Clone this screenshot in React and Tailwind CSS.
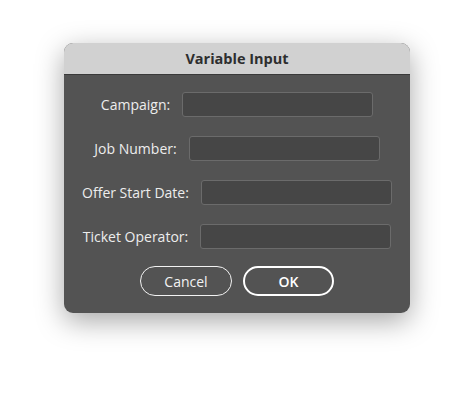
import React from "react";

const fields = ["Campaign:", "Job Number:", "Offer Start Date:", "Ticket Operator:"];

export default function App() {
  return (
    <div
      className="w-[474px] h-[398px] bg-white pt-[43px] pl-[64px]"
      style={{ fontFamily: "'Open Sans', 'Liberation Sans', sans-serif" }}
    >
      <div className="w-[346px] h-[270px] rounded-[9px] overflow-hidden bg-[#535353] shadow-[0_8px_28px_rgba(0,0,0,0.35)] flex flex-col">
        <div className="h-[32px] bg-[#d1d1d1] flex items-center justify-center border-b border-[#3a3a3a]">
          <span className="text-[14.5px] font-bold text-[#2e2e2e]">Variable Input</span>
        </div>
        <div className="flex flex-col items-center pt-[17px] gap-[19px]">
          {fields.map((f) => (
            <div key={f} className="flex items-center gap-[12px]">
              <span className="text-[14px] text-[#ededed]">{f}</span>
              <div className="w-[191px] h-[25px] rounded-[3px] bg-[#464646] border border-[#6b6b6b]" />
            </div>
          ))}
        </div>
        <div className="flex justify-center gap-[11px] mt-[17px]">
          <button className="w-[92px] h-[30px] rounded-full border-[1.5px] border-[#f2f2f2] text-[14px] text-[#f2f2f2]">
            Cancel
          </button>
          <button className="w-[91px] h-[30px] rounded-full border-[2.5px] border-white text-[14px] font-semibold text-white">
            OK
          </button>
        </div>
      </div>
    </div>
  );
}
